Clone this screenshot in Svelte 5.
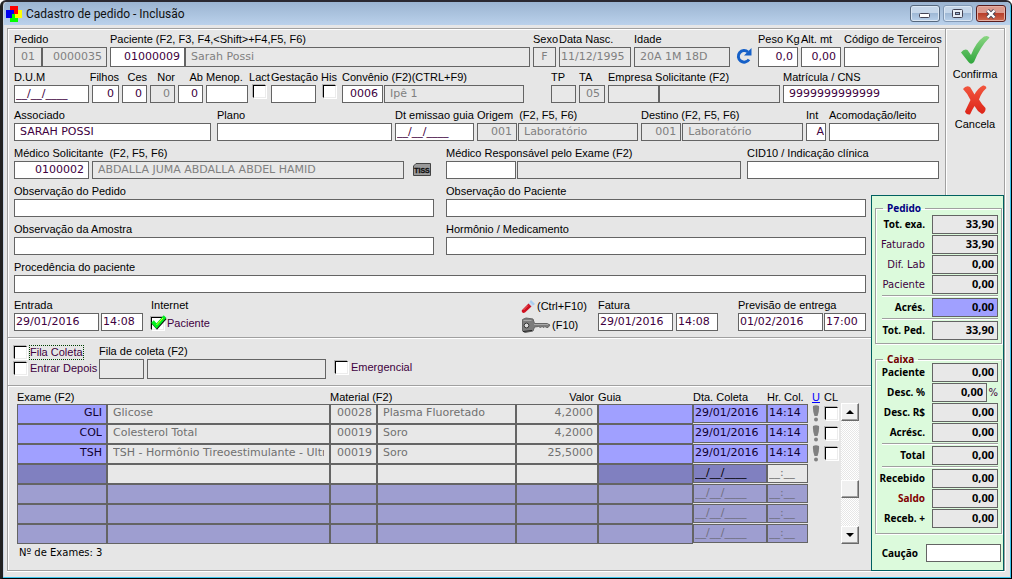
<script>
  const rowPatient = [
    { w: 93, label: 'Pedido', boxes: [{ w: 28, v: '01', ro: true, a: 'center' }, { w: 65, v: '0000035', ro: true, a: 'right' }] },
    { w: 420, label: 'Paciente (F2, F3, F4,<Shift>+F4,F5, F6)', boxes: [{ w: 75, v: '01000009', a: 'right' }, { w: 345, v: 'Sarah Possi', ro: true }] },
    { w: 23, label: 'Sexo', boxes: [{ w: 1, v: 'F', ro: true, a: 'center' }] },
    { w: 72, label: 'Data Nasc.', boxes: [{ w: 1, v: '11/12/1995', ro: true, a: 'tight' }] },
    { w: 96, label: 'Idade', boxes: [{ w: 1, v: '20A 1M 18D', ro: true }] },
    { w: 22, kind: 'refresh' },
    { w: 40, label: 'Peso Kg', boxes: [{ w: 1, v: '0,0', a: 'right' }] },
    { w: 40, label: 'Alt. mt', boxes: [{ w: 1, v: '0,00', a: 'right' }] },
    { w: 95, label: 'Código de Terceiros', boxes: [{ w: 1, v: '' }] }
  ];
  const rowClinic = [
    { w: 75, label: 'D.U.M', boxes: [{ w: 1, v: '__/__/____', a: 'tight' }] },
    { w: 27, label: 'Filhos', end: true, boxes: [{ w: 1, v: '0', a: 'right' }] },
    { w: 25, label: 'Ces', end: true, boxes: [{ w: 1, v: '0', a: 'right' }] },
    { w: 25, label: 'Nor', end: true, boxes: [{ w: 1, v: '0', ro: true, a: 'right' }] },
    { w: 25, label: 'Ab', end: true, boxes: [{ w: 1, v: '0', a: 'right' }] },
    { w: 42, label: 'Menop.', boxes: [{ w: 1, v: '' }] },
    { w: 17, label: 'Lact', kind: 'check' },
    { w: 45, label: 'Gestação', boxes: [{ w: 1, v: '' }] },
    { w: 20, label: 'His', kind: 'check' },
    { w: 182, label: 'Convênio (F2)(CTRL+F9)', gap: 1, boxes: [{ w: 41, v: '0006', a: 'right' }, { w: 140, v: 'Ipê 1', ro: true }] },
    { w: 21, kind: 'space' },
    { w: 25, label: 'TP', boxes: [{ w: 1, v: '', ro: true }] },
    { w: 26, label: 'TA', boxes: [{ w: 1, v: '05', ro: true, a: 'right' }] },
    { w: 172, label: 'Empresa Solicitante (F2)', boxes: [{ w: 50, v: '', ro: true }, { w: 120, v: '', ro: true }] },
    { w: 156, label: 'Matrícula / CNS', boxes: [{ w: 1, v: '9999999999999' }] }
  ];
  const rowPlan = [
    { w: 197, label: 'Associado', boxes: [{ w: 1, v: 'SARAH POSSI' }] },
    { w: 0, kind: 'space' },
    { w: 175, label: 'Plano', boxes: [{ w: 1, v: '' }] },
    { w: 79, label: 'Dt emissao guia', boxes: [{ w: 1, v: '__/__/____', a: 'tight' }] },
    { w: 161, label: 'Origem  (F2, F5, F6)', gap: 1, boxes: [{ w: 40, v: '001', ro: true, a: 'right' }, { w: 120, v: 'Laboratório', ro: true }] },
    { w: 162, label: 'Destino (F2, F5, F6)', gap: 1, boxes: [{ w: 40, v: '001', ro: true, a: 'right' }, { w: 120, v: 'Laboratório', ro: true }] },
    { w: 20, label: 'Int', boxes: [{ w: 1, v: 'A', a: 'flush' }] },
    { w: 110, label: 'Acomodação/leito', boxes: [{ w: 1, v: '' }] }
  ];
  const rowDoctor = [
    { w: 390, label: 'Médico Solicitante  (F2, F5, F6)', gap: 3, boxes: [{ w: 75, v: '0100002', a: 'right' }, { w: 312, v: 'ABDALLA JUMA ABDALLA ABDEL HAMID', ro: true }] },
    { w: 29, kind: 'tiss' },
    { w: 4, kind: 'space' },
    { w: 295, label: 'Médico Responsável pelo Exame (F2)', gap: 1, boxes: [{ w: 70, v: '' }, { w: 224, v: '', ro: true }] },
    { w: 0, kind: 'space' },
    { w: 192, label: 'CID10 / Indicação clínica', boxes: [{ w: 1, v: '' }] }
  ];
  const pair = (a, b) => [
    { w: 420, label: a, boxes: [{ w: 1, v: '' }] },
    { w: 6, kind: 'space' },
    { w: 420, label: b, boxes: [{ w: 1, v: '' }] }
  ];
  const rowDates = [
    { w: 129, label: 'Entrada', gap: 2, boxes: [{ w: 85, v: '29/01/2016', a: 'tight' }, { w: 42, v: '14:08', a: 'tight' }] },
    { w: 2, kind: 'space' },
    { w: 67, label: 'Internet', kind: 'internet' },
    { w: 297, kind: 'space' },
    { w: 74, kind: 'keys' },
    { w: 120, label: 'Fatura', gap: 3, boxes: [{ w: 75, v: '29/01/2016', a: 'tight' }, { w: 42, v: '14:08', a: 'tight' }] },
    { w: 14, kind: 'space' },
    { w: 128, label: 'Previsão de entrega', gap: 1, boxes: [{ w: 85, v: '01/02/2016', a: 'tight' }, { w: 42, v: '17:00', a: 'tight' }] }
  ];
  const topRows = [rowPatient, rowClinic, rowPlan, rowDoctor];
  const lowRows = [
    pair('Observação do Pedido', 'Observação do Paciente'),
    pair('Observação da Amostra', 'Hormônio / Medicamento'),
    [{ w: 1, label: 'Procedência do paciente', boxes: [{ w: 1, v: '' }] }],
    rowDates
  ];
  const tracks = (list) => list.map((i) => `minmax(0, ${i.w}fr)`).join(' ');

  const exams = [
    { kind: 'filled', c: ['GLI', 'Glicose', '00028', 'Plasma Fluoretado', '4,2000', '', '29/01/2016', '14:14'] },
    { kind: 'filled', c: ['COL', 'Colesterol Total', '00019', 'Soro', '4,2000', '', '29/01/2016', '14:14'] },
    { kind: 'filled', c: ['TSH', 'TSH - Hormônio Tireoestimulante - Ultrasensível', '00019', 'Soro', '25,5000', '', '29/01/2016', '14:14'] },
    { kind: 'current', c: ['', '', '', '', '', '', '__/__/____', '__:__'] },
    { kind: 'empty', c: ['', '', '', '', '', '', '__/__/____', '__:__'] },
    { kind: 'empty', c: ['', '', '', '', '', '', '__/__/____', '__:__'] },
    { kind: 'empty', c: ['', '', '', '', '', '', '__/__/____', '__:__'] }
  ];
  const colNames = ['Exame', 'Nome do exame', 'Código do material', 'Material', 'Valor', 'Guia', 'Data da coleta', 'Hora da coleta'];

  const order = [
    { l: 'Tot. exa.', v: '33,90', b: true },
    { l: 'Faturado', v: '33,90' },
    { l: 'Dif. Lab', v: '0,00' },
    { l: 'Paciente', v: '0,00' },
    { l: 'Acrés.', v: '0,00', b: true, hot: true, line: true },
    { l: 'Tot. Ped.', v: '33,90', b: true, line: true }
  ];
  const cash = [
    { l: 'Paciente', v: '0,00', b: true },
    { l: 'Desc. %', v: '0,00', b: true, pct: true },
    { l: 'Desc. R$', v: '0,00', b: true },
    { l: 'Acrésc.', v: '0,00', b: true },
    { l: 'Total', v: '0,00', b: true, line: true },
    { l: 'Recebido', v: '0,00', b: true, line: true },
    { l: 'Saldo', v: '0,00', b: true, red: true },
    { l: 'Receb. +', v: '0,00', b: true }
  ];
</script>

{#snippet formRow(items, name)}
  <div class="row" style={`grid-template-columns:${tracks(items)}`}>
    {#each items as g, i}
      {@const id = `${name}-${i}`}
      {#if g.kind === 'space'}
        <span></span>
      {:else if g.kind === 'refresh'}
        <button class="icon-btn" aria-label="Atualizar">
          <svg width="18" height="18" viewBox="0 0 18 18">
            <path d="M13 5A5.800 5.800 0 1 0 14 12.500" fill="none" stroke="#1560c8" stroke-width="3" />
            <path d="M16.500 1v7.500H9z" fill="#1560c8" />
          </svg>
        </button>
      {:else if g.kind === 'tiss'}
        <button class="icon-btn" aria-label="TISS">
          <svg width="18" height="14" viewBox="0 0 18 14">
            <path d="M3 .5h14.500v12H.5V3z" fill="#9a9a9a" stroke="#444" />
            <text x="9" y="9.500" text-anchor="middle" font-family="Liberation Sans, sans-serif" font-weight="bold" font-size="7" fill="#111" stroke="#111" stroke-width=".3">TISS</text>
          </svg>
        </button>
      {:else if g.kind === 'keys'}
        <div class="keys">
          <button class="key-btn">
            <svg width="15" height="15" viewBox="0 0 15 15">
              <path d="M10 1l4 4-2 1.500L8.500 3z" fill="#a9cdf0" />
              <path d="M8.500 3l3.500 3.500-2.500 2L6.500 5.500z" fill="#c9dcf0" />
              <path d="M7.500 4.500l3 3L4 13.500Q2 14.500 1 13T1.500 10.500z" fill="#cf1020" />
              <path d="M7 6.500L2.500 11" stroke="#f06a6a" />
            </svg>(Ctrl+F10)
          </button>
          <button class="key-btn">
            <svg width="30" height="16" viewBox="0 0 30 16">
              <path d="M1.500 2.500L5 1l7 1 1.500 4.500H26L29 8l-2 2.500h-1.500L24 9.500l-1 1-2-1-1.500 1-2-1-4 .5-1.500 4-8 1.500L1.500 14z" fill="#7d7d7d" stroke="#666" />
              <path d="M13 7.500h14M2.500 3.500h8" stroke="#aaa" />
              <circle cx="5.500" cy="8.500" r="2.400" fill="#ddd" stroke="#333" />
              <path d="M2 14.500l9-1" stroke="#222" />
            </svg>(F10)
          </button>
        </div>
      {:else if g.kind === 'internet'}
        <div class="group">
          <span class="lab">{g.label}</span>
          <label class="tick">
            <span class="tick-box">
              <input type="checkbox" />
              <svg width="16" height="15" viewBox="0 0 16 15">
                <path d="M2 8l4 4.500L14.500 3" fill="none" stroke="#111" stroke-width="3" />
                <path d="M1.500 6.500l4 4.500L14 1.500" fill="none" stroke="#00f020" stroke-width="3.500" />
                <path d="M5.500 10L12 3" stroke="#e8ff20" />
              </svg>
            </span>Paciente
          </label>
        </div>
      {:else if g.kind === 'check'}
        <div class="group">
          <label class="lab mid" for={id}>{g.label}</label>
          <input type="checkbox" class="under" {id} />
        </div>
      {:else}
        <div class="group">
          <label class="lab" class:end={g.end} for={`${id}-0`}>{g.label}</label>
          <div class="boxes" style={`grid-template-columns:${tracks(g.boxes)};column-gap:${g.gap ?? 0}px`}>
            {#each g.boxes as b, j}
              <input id={`${id}-${j}`} class={`box ${b.a ?? ''}`} class:ro={b.ro} value={b.v} readonly={b.ro} aria-label={j ? `${g.label} descrição` : undefined} />
            {/each}
          </div>
        </div>
      {/if}
    {/each}
  </div>
{/snippet}

{#snippet sums(list, name)}
  {#each list as s, i}
    {#if s.line}<hr />{/if}
    <div class="sum">
      <label for={`${name}${i}`} class:strong={s.b} class:red={s.red}>{s.l}</label>
      <div class="sum-box">
        <input id={`${name}${i}`} class="box amount" class:hot={s.hot} value={s.v} readonly />
        {#if s.pct}<span>%</span>{/if}
      </div>
    </div>
  {/each}
{/snippet}

<div class="window">
  <header>
    <svg width="16" height="16" viewBox="0 0 16 16">
      <path d="M4 0h8v8H4z" fill="#f00" />
      <path d="M0 4h6v8H0z" fill="#00e" />
      <path d="M8 4h8v8H8z" fill="#ff0" />
      <path d="M4 8h8v8H4z" fill="#0f0" />
      <path d="M4 4h4v4H6v4H4z" fill="#00e" />
      <path d="M8 4h4v4H8z" fill="#f00" />
      <path d="M9 8h3v4H9z" fill="#ff0" />
    </svg>
    <h1>Cadastro de pedido - Inclusão</h1>
    <div class="controls">
      <button aria-label="Minimizar"><svg width="14" height="10" viewBox="0 0 14 10"><rect x="1.500" y="4.500" width="10" height="4" rx="1" fill="#fff" stroke="#445" /></svg></button>
      <button class="dim" aria-label="Maximizar"><svg width="14" height="10" viewBox="0 0 14 10"><rect x="1.500" y=".5" width="10" height="8" rx="1" fill="#e8eef6" stroke="#445" /><rect x="4.500" y="3.500" width="4" height="2" fill="#9ab4d4" stroke="#445" /></svg></button>
      <button class="close" aria-label="Fechar"><svg width="14" height="10" viewBox="0 0 14 10"><path d="M3.500 1.500l7 7M10.500 1.500l-7 7" stroke="#445" stroke-width="4" /><path d="M3.500 1.500l7 7M10.500 1.500l-7 7" stroke="#fff" stroke-width="2.400" /></svg></button>
    </div>
  </header>

  <main>
    <section class="top">
      {#each topRows as r, i}{@render formRow(r, `t${i}`)}{/each}
    </section>

    <nav>
      <button>
        <svg width="32" height="32" viewBox="0 0 32 32">
          <defs><linearGradient id="gr" x1="0" y1="0" x2="0" y2="1"><stop offset="0" stop-color="#8ad682" /><stop offset="1" stop-color="#2fa53c" /></linearGradient></defs>
          <path d="M2 18.500Q5 14.500 8.500 16L12 21Q17 8 25 2.500Q29 1 30.500 3.500Q21 13 15 28Q12 31.500 9.500 28Z" fill="url(#gr)" />
        </svg>Confirma
      </button>
      <button>
        <svg width="32" height="32" viewBox="0 0 32 32">
          <defs><linearGradient id="rd" x1="0" y1="0" x2="0" y2="1"><stop offset="0" stop-color="#f2573f" /><stop offset="1" stop-color="#dd2418" /></linearGradient></defs>
          <path d="M4 5Q7 1 11 3Q13 6 15.500 10.500Q19 4 24 1.500Q27 1 27.500 4Q22 9 20 15.500Q22.500 20 26.500 24Q27 28 23 30Q18 27 15.500 22Q13 26 11 30.500Q7 31 6 27.500Q9 21 11.500 16Q9 10 4 5Z" fill="url(#rd)" />
        </svg>Cancela
      </button>
    </nav>

    <div class="left">
      <section class="low">
        {#each lowRows as r, i}{@render formRow(r, `l${i}`)}{/each}
      </section>

      <section class="queue">
        <div class="checks">
          <label class="tick"><input type="checkbox" /><span class="focus">Fila Coleta</span></label>
          <label class="tick"><input type="checkbox" /><span>Entrar Depois</span></label>
        </div>
        <div class="group">
          <label class="lab" for="fila">Fila de coleta (F2)</label>
          <div class="queue-boxes">
            <input id="fila" class="box ro" readonly />
            <input class="box ro" readonly aria-label="Nome da fila" />
          </div>
        </div>
        <label class="tick emerg"><input type="checkbox" /><span>Emergencial</span></label>
      </section>

      <section class="exams">
        <div class="grid">
          <table>
            <colgroup>
              <col class="c1" /><col class="c2" /><col class="c3" /><col class="c4" /><col class="c5" /><col class="c6" /><col class="c7" /><col class="c8" /><col class="c9" /><col class="c10" />
            </colgroup>
            <thead>
              <tr>
                <th colspan="2">Exame (F2)</th><th colspan="2">Material (F2)</th><th class="num">Valor</th><th>Guia</th><th>Dta. Coleta</th><th>Hr. Col.</th><th class="c"><a href="#u">U</a></th><th>CL</th>
              </tr>
            </thead>
            <tbody>
              {#each exams as e}
                <tr class={e.kind}>
                  {#each e.c as v, j}
                    <td><input class={`box k${j}`} value={v} aria-label={colNames[j]} /></td>
                  {/each}
                  <td class="c">
                    {#if e.kind === 'filled'}
                      <svg width="8" height="17" viewBox="0 0 8 17"><path d="M1 1Q4-.5 7 1Q7.500 6 5.500 11H2.500Q.5 6 1 1z" fill="#808080" /><circle cx="4" cy="14.500" r="2" fill="#808080" /></svg>
                    {/if}
                  </td>
                  <td>{#if e.kind === 'filled'}<input type="checkbox" aria-label="CL" />{/if}</td>
                </tr>
              {/each}
            </tbody>
          </table>
          <div class="scroll">
            <button aria-label="Subir"><svg width="8" height="4" viewBox="0 0 8 4"><path d="M0 4l4-4 4 4z" /></svg></button>
            <div class="track"><div class="thumb"></div></div>
            <button aria-label="Descer"><svg width="8" height="4" viewBox="0 0 8 4"><path d="M0 0h8L4 4z" /></svg></button>
          </div>
        </div>
        <p>Nº de Exames: 3</p>
      </section>
    </div>

    <aside>
      <fieldset class="order">
        <legend>Pedido</legend>
        {@render sums(order, 'o')}
      </fieldset>
      <fieldset class="cash">
        <legend>Caixa</legend>
        {@render sums(cash, 'c')}
      </fieldset>
      <div class="deposit">
        <label for="caucao">Caução</label>
        <input id="caucao" class="box" />
      </div>
    </aside>
  </main>
</div>

<style>
  :global(body) { margin: 0; background: #fff; }
  * { box-sizing: border-box; }
  .window {
    min-height: 100vh;
    display: flex;
    flex-direction: column;
    padding: 0 6px 7px 4px;
    border: 1px solid #000;
    border-width: 2px 1px 1px 3px;
    border-left-color: #222;
    border-top-color: #2a2830;
    border-radius: 6px 6px 0 0;
    background: #e6e6e6;
    box-shadow: inset -1px -1px 0 #3cc4ec, inset 1px 0 0 #c8d4e4;
    font: 11px/15px "Liberation Sans", Arial, sans-serif;
    color: #000;
  }
  header {
    height: 23px;
    margin: 0 -5px 3px -3px;
    padding: 0 4px 0 2px;
    display: flex;
    align-items: center;
    gap: 4px;
    border-radius: 4px 4px 0 0;
    background: linear-gradient(#9bb4d1, #bad1eb);
  }
  h1 { margin: 0; flex: 1; font: 12px/16px Roboto, sans-serif; color: #111; }
  button { font: inherit; color: inherit; padding: 0; border: 0; background: none; }
  .controls { display: flex; gap: 3px; }
  .controls button {
    width: 30px; height: 17px;
    display: grid; place-items: center;
    border: 1px solid #56687e; border-radius: 3px;
    background: linear-gradient(#c6d7ea 45%, #9fb9d6 50%, #b8d0ea);
    box-shadow: inset 0 0 0 1px #dbe7f4;
  }
  .controls .dim { border-color: #8299b5; }
  .controls .close { border-color: #5a1c1c; background: linear-gradient(#dc9a8e 45%, #b8402c 50%, #cf6a50); box-shadow: inset 0 0 0 1px #e6b0a4; }

  main {
    flex: 1;
    display: grid;
    grid-template-columns: minmax(0, 1fr) 74px 59px;
    grid-template-rows: auto 1fr;
    border: 1px solid #a0a0a0;
    box-shadow: inset 1px 1px 0 #fff, 0 1px 0 #fff, 1px 0 0 #fff;
  }
  .top { grid-column: 1 / 3; padding: 3px 6px 0; }
  nav {
    margin-bottom: -11px;
    padding-top: 5px;
    display: flex; flex-direction: column; align-items: center; gap: 2px;
    border-left: 1px solid #a0a0a0;
    box-shadow: inset 1px 0 0 #fff;
  }
  nav button { display: flex; flex-direction: column; align-items: center; line-height: 16px; }
  .left { display: flex; flex-direction: column; }
  .low { padding: 0 5px 1px 6px; }

  .row { display: grid; column-gap: 3px; height: 38px; }
  .group { min-width: 0; display: flex; flex-direction: column; }
  .lab { height: 15px; white-space: pre; }
  .lab.end { align-self: flex-end; }
  .lab.mid { align-self: center; }
  .boxes { display: grid; }
  .box {
    width: 100%; min-width: 0; height: 18px;
    margin: 0; padding: 0 5px 1px;
    border: 1px solid #646464; border-radius: 0; outline: 0;
    background: #fff; color: #400040;
    font: 11px/15px "DejaVu Sans", Verdana, sans-serif;
  }
  .top .row:first-child .box { height: 20px; }
  .ro { background: #e8e8e8; color: #808080; }
  .right { text-align: right; padding-right: 4px; }
  .center { text-align: center; }
  .tight { padding: 0 1px 1px; }
  .flush { text-align: right; padding: 0 1px 1px; }
  .icon-btn { display: grid; place-items: center; height: 18px; margin-top: 15px; }

  input[type='checkbox'] {
    appearance: none;
    flex: none;
    display: block;
    width: 13px; height: 13px; margin: 0;
    background: #fff;
    border: 1px solid #000;
    border-right-color: #ececec; border-bottom-color: #ececec;
    box-shadow: -1px -1px 0 #b4b4b4, 1px 1px 0 #fff;
  }
  .under { align-self: center; margin-top: 3px; }
  .tick { display: flex; align-items: center; gap: 3px; white-space: nowrap; color: #400040; }
  .group .tick { margin-top: 3px; }
  .tick-box { position: relative; }
  .tick-box svg { position: absolute; left: 0; top: -2px; }
  .keys { display: flex; flex-direction: column; align-items: flex-start; gap: 3px; }
  .key-btn { display: flex; align-items: center; gap: 1px; height: 16px; }

  .queue {
    display: grid;
    grid-template-columns: 82px 227px auto;
    column-gap: 3px;
    height: 48px;
    padding: 6px 6px 0;
    border-top: 1px solid #a0a0a0;
    box-shadow: inset 0 1px 0 #fff;
  }
  .checks { display: flex; flex-direction: column; gap: 1px; padding-top: 1px; }
  .checks .tick { height: 15px; }
  .focus { outline: 1px dotted #004000; line-height: 13px; }
  .queue-boxes { display: grid; grid-template-columns: 45px 1fr; column-gap: 3px; }
  .queue-boxes .box { height: 20px; }
  .emerg { align-self: start; margin: 16px 0 0 6px; }

  .exams { flex: 1; padding: 4px 12px 0 9px; border-top: 1px solid #a0a0a0; box-shadow: inset 0 1px 0 #fff; }
  .grid { display: flex; gap: 2px; align-items: flex-end; }
  table { flex: 1; width: 0; table-layout: fixed; border-collapse: collapse; }
  .c1 { width: 90px; } .c3 { width: 47px; } .c4 { width: 139px; } .c5 { width: 82px; } .c6 { width: 95px; }
  .c7 { width: 74px; } .c8 { width: 41px; } .c9 { width: 16px; } .c10 { width: 15px; }
  th { padding: 0; height: 14px; font-weight: normal; line-height: 14px; text-align: left; white-space: nowrap; }
  .num { text-align: right; padding-right: 4px; }
  .c { text-align: center; }
  a { color: #00f; }
  td { padding: 0; height: 20px; vertical-align: top; }
  td svg { display: block; margin: 1px auto 0; }
  td .box { display: block; height: 20px; padding-bottom: 3px; }
  td input[type='checkbox'] { margin: 3px 0 0 1px; }
  tr .k6, tr .k7 { height: 19px; padding-left: 1px; padding-right: 1px; }
  .k0, .k2, .k4 { text-align: right; padding-right: 4px; }
  .filled .box { background: #e8e8e8; color: #707070; }
  .filled .k0, .filled .k5, .filled .k6, .filled .k7 { background: #a0a0ff; color: #100030; }
  .current .box { background: #e8e8e8; color: #707070; }
  .current .k0, .current .k5, .current .k6 { background: #8080c0; color: #000; }
  .empty .box { background: #9e9ed0; color: #707080; }
  .scroll { width: 18px; height: 141px; display: flex; flex-direction: column; }
  .scroll button, .thumb {
    height: 18px;
    display: grid; place-items: center;
    background: #f0f0f0;
    border: 1px solid #fff; border-right-color: #696969; border-bottom-color: #696969;
    box-shadow: inset -1px -1px 0 #a0a0a0;
  }
  .track { flex: 1; display: flex; flex-direction: column; background: repeating-conic-gradient(#fff 0 25%, #e6e6e6 0 50%) 0 0 / 2px 2px; }
  .thumb { margin: 59px 0 auto; }
  p { margin: 1px 2px 0; font: 10px/15px "DejaVu Sans", Verdana, sans-serif; }

  aside {
    grid-column: 2 / 4;
    margin: 11px 0 -1px;
    padding: 8px 1px 8px 3px;
    border: 1px solid #006060;
    background: #dcfadc;
    font: 10px/19px "DejaVu Sans", Verdana, sans-serif;
    color: #400040;
  }
  fieldset { margin: 0; padding: 3px 3px 0; min-width: 0; border: 1px solid #a0a0a0; box-shadow: inset 1px 1px 0 #fff, 1px 1px 0 #fff; }
  legend { margin-left: 4px; padding: 0 4px; font: bold 10px/8px "Noto Sans", sans-serif; color: #000080; }
  .order { padding-bottom: 2px; }
  .cash { margin-top: 11px; padding-top: 0; padding-bottom: 4px; }
  .cash legend { color: #700000; }
  .sum { display: grid; grid-template-columns: 1fr 66px; column-gap: 7px; height: 20px; text-align: right; white-space: nowrap; }
  .sum label { justify-self: end; }
  .strong { font-weight: bold; font-family: "Noto Sans", sans-serif; color: #000; }
  .red { color: #800000; }
  .sum-box { display: flex; }
  .sum-box span { flex: none; width: 11px; }
  .amount { flex: 1; height: 19px; background: #e8e8e8; color: #000; text-align: right; font: bold 11px/15px "Noto Sans", sans-serif; padding: 0 3px 2px; }
  .hot { background: #a0a0ff; }
  hr { height: 2px; margin: 0 0 1px 3px; border: 0; border-top: 1px solid #a0a0a0; background: #fff; }
  .deposit { display: flex; align-items: center; justify-content: flex-end; gap: 8px; margin: 10px 1px 0; }
  .deposit label { font: bold 10px/15px "Noto Sans", sans-serif; color: #000; }
  .deposit .box { width: 75px; }
</style>
